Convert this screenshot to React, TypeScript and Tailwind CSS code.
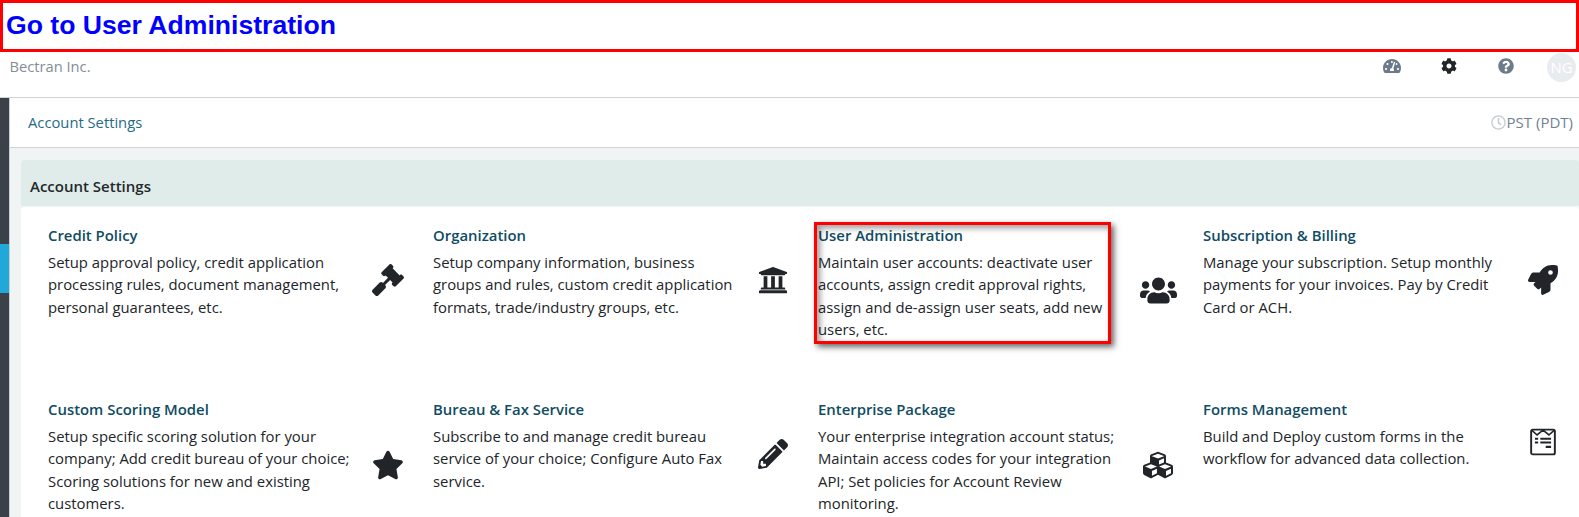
import type { ReactNode } from 'react'
import {
  FaCog,
  FaCubes,
  FaGavel,
  FaPencilAlt,
  FaQuestionCircle,
  FaRegClock,
  FaRocket,
  FaStar,
  FaTachometerAlt,
  FaUniversity,
  FaUsers,
} from 'react-icons/fa'

function FormsIcon() {
  return (
    <svg viewBox="0 0 26 26" className="w-[28px] h-[28px]" fill="none" stroke="#212529">
      <path d="M3.5 1.5h19a1.5 1.5 0 0 1 1.5 1.5v20a1.5 1.5 0 0 1-1.5 1.5h-19A1.5 1.5 0 0 1 2 23V3a1.5 1.5 0 0 1 1.5-1.5z" strokeWidth="1.8" />
      <path d="M2.5 2l5 4.5 5.5-4.5 5.5 4.5 5-4.5" strokeWidth="1.5" />
      <path d="M5.5 10h3M10.5 10h10M5.5 13.5h3M10.5 13.5h10M15.5 17.5h5" strokeWidth="2" />
    </svg>
  )
}

type Item = { title: string; text: ReactNode; icon: ReactNode }

const items: Item[] = [
  {
    title: 'Credit Policy',
    text: 'Setup approval policy, credit application processing rules, document management, personal guarantees, etc.',
    icon: <FaGavel size={32} />,
  },
  {
    title: 'Organization',
    text: 'Setup company information, business groups and rules, custom credit application formats, trade/industry groups, etc.',
    icon: <FaUniversity size={30} />,
  },
  {
    title: 'User Administration',
    text: 'Maintain user accounts: deactivate user accounts, assign credit approval rights, assign and de-assign user seats, add new users, etc.',
    icon: <FaUsers size={37} />,
  },
  {
    title: 'Subscription & Billing',
    text: 'Manage your subscription. Setup monthly payments for your invoices. Pay by Credit Card or ACH.',
    icon: <FaRocket size={30} />,
  },
  {
    title: 'Custom Scoring Model',
    text: 'Setup specific scoring solution for your company; Add credit bureau of your choice; Scoring solutions for new and existing customers.',
    icon: <FaStar size={32} />,
  },
  {
    title: 'Bureau & Fax Service',
    text: 'Subscribe to and manage credit bureau service of your choice; Configure Auto Fax service.',
    icon: <FaPencilAlt size={30} />,
  },
  {
    title: 'Enterprise Package',
    text: 'Your enterprise integration account status; Maintain access codes for your integration API; Set policies for Account Review monitoring.',
    icon: <FaCubes size={30} />,
  },
  {
    title: 'Forms Management',
    text: 'Build and Deploy custom forms in the workflow for advanced data collection.',
    icon: <FormsIcon />,
  },
]

function Card({ item, highlight }: { item: Item; highlight: boolean }) {
  return (
    <div className="h-[174px] pl-[27px]">
      <div className="flex items-center">
        <div className="relative w-[316px] shrink-0 pb-[17px]">
          {highlight && (
            <div className="absolute left-[-4px] top-[-2px] w-[297px] h-[122px] border-[3px] border-[#ff0000] shadow-[3px_3px_6px_rgba(0,0,0,0.6),inset_3px_3px_6px_rgba(0,0,0,0.4)]" />
          )}
          <h4 className="text-[14.9px] leading-[22.5px] font-semibold text-[#0f4c63]">{item.title}</h4>
          <p className="mt-[4px] text-[14.85px] leading-[22.5px] text-[#212529] w-[305px]">{item.text}</p>
        </div>
        <div className="w-[48px] shrink-0 flex justify-center text-[#212529]">{item.icon}</div>
      </div>
    </div>
  )
}

export default function App() {
  return (
    <div className="w-[1579px] h-[517px] overflow-hidden bg-white font-['Open_Sans',sans-serif]">
      <div className="h-[52px] border-[3px] border-[#ff0000] flex items-center pl-[3px] font-['Liberation_Sans',sans-serif] font-bold text-[26.6px] text-[#0000ff]">
        Go to User Administration
      </div>

      <div className="h-[45px] flex justify-between border-b border-[#d0d3d6] box-content">
        <span className="pl-[9.5px] pt-[3px] text-[14.7px] leading-[22.5px] text-[#858e96]">Bectran Inc.</span>
        <div className="flex items-start">
          <FaTachometerAlt size={18} className="mt-[5px] text-[#6c7a89]" />
          <FaCog size={16} className="ml-[40px] mt-[6px] text-[#212529]" />
          <FaQuestionCircle size={16} className="ml-[41px] mt-[6px] text-[#6c7a89]" />
          <div className="ml-[33px] mr-[3px] mt-[1px] w-[29px] h-[29px] rounded-full bg-[#e9ecef] flex items-center justify-center text-[15px] text-white">
            NG
          </div>
        </div>
      </div>

      <div className="flex h-[420px]">
        <div className="w-[9px] shrink-0 bg-[#3a4149] pt-[146px]">
          <div className="h-[49px] bg-[#20a8d8]" />
        </div>
        <div className="flex-1 border-l border-[#c8ced3] bg-[#f0f4f5]">
          <div className="h-[50px] bg-white border-b border-[#d0d3d6] flex items-center justify-between pl-[18px] pr-[6px]">
            <span className="text-[14.75px] text-[#1f6b86]">Account Settings</span>
            <span className="flex items-center gap-[1px] text-[15px] text-[#73818f]">
              <FaRegClock size={15} className="text-[#c8ced3]" />
              PST (PDT)
            </span>
          </div>
          <div className="pl-[11px] pt-[12px]">
            <div className="h-[46px] rounded-t-[4px] bg-[#dfecea] flex items-center pl-[9px] pt-[6px] text-[15px] font-semibold text-[#23282c]">
              Account Settings
            </div>
            <div className="bg-white rounded-[4px] mt-[1px] pt-[17px] grid grid-cols-[385px_385px_385px_385px]">
              {items.map((item) => (
                <Card key={item.title} item={item} highlight={item.title === 'User Administration'} />
              ))}
            </div>
          </div>
        </div>
      </div>
    </div>
  )
}
